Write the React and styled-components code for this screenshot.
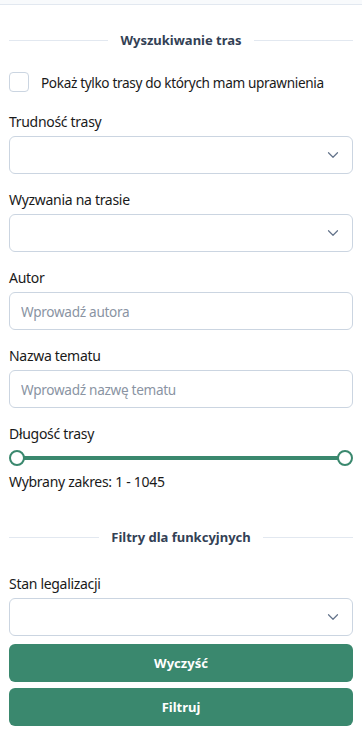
import React, { useState } from "react"
import styled, { createGlobalStyle } from "styled-components"

const GlobalStyle = createGlobalStyle`
  * { box-sizing: border-box; }
  body {
    margin: 0;
    background: #ffffff;
    font-family: "Segoe UI", "Noto Sans", "Open Sans", sans-serif;
    color: #1a1a1a;
  }
`

const green = "#3a886e"

const TopStrip = styled.div`
  height: 5px;
  background: #f8fafc;
  border-bottom: 1px solid #e2e8f0;
`

const Panel = styled.div`
  padding: 0 9px;
  display: flex;
  flex-direction: column;
`

const Divider = styled.div`
  display: flex;
  align-items: center;
  gap: 12px;
  margin-top: ${p => p.$top}px;
  font-size: 13px;
  font-weight: 700;
  color: #334155;
  &::before,
  &::after {
    content: "";
    flex: 1;
    height: 1px;
    background: #e2e8f0;
  }
`

const CheckRow = styled.label`
  display: flex;
  align-items: center;
  gap: 12px;
  margin-top: 23px;
  font-size: 13.6px;
  letter-spacing: -0.35px;
`

const Box = styled.span`
  width: 20px;
  height: 20px;
  border: 1px solid #cbd5e1;
  border-radius: 4px;
  background: #fff;
`

const Field = styled.div`
  display: flex;
  flex-direction: column;
  gap: 5px;
  margin-top: ${p => p.$top || 16}px;
`

const Label = styled.div`
  font-size: 14px;
  line-height: 19px;
  letter-spacing: -0.3px;
`

const SelectBox = styled.div`
  height: 38px;
  border: 1px solid #cbd5e1;
  border-radius: 6px;
  display: flex;
  align-items: center;
  justify-content: flex-end;
  padding-right: 10px;
  color: #64748b;
`

const Input = styled.input`
  height: 38px;
  border: 1px solid #cbd5e1;
  border-radius: 6px;
  padding: 0 11px;
  font-family: inherit;
  font-size: 13.6px;
  letter-spacing: -0.3px;
  outline: none;
  &::placeholder {
    color: #8a94a3;
  }
`

const SliderWrap = styled.div`
  position: relative;
  height: 16px;
  margin: 2px 0 0;
`

const Track = styled.div`
  position: absolute;
  left: 7px;
  right: 7px;
  top: 6px;
  height: 4px;
  background: ${green};
`

const Thumb = styled.div`
  position: absolute;
  top: 0;
  width: 16px;
  height: 16px;
  border-radius: 50%;
  border: 2.5px solid ${green};
  background: #fff;
  ${p => (p.$right ? "right: 0;" : "left: 0;")}
`

const Range = styled.div`
  font-size: 14px;
  letter-spacing: -0.3px;
  margin-top: 6px;
`

const Button = styled.button`
  height: 38px;
  width: 100%;
  border: none;
  border-radius: 6px;
  background: ${green};
  color: #fff;
  font-family: inherit;
  font-size: 13px;
  font-weight: 700;
  margin-top: ${p => p.$top}px;
`

const Chevron = () => (
  <svg width="18" height="18" viewBox="0 0 24 24" fill="none" stroke="currentColor" strokeWidth="1.6" strokeLinecap="round" strokeLinejoin="round">
    <path d="m6 9 6 6 6-6" />
  </svg>
)

const Select = () => (
  <SelectBox>
    <Chevron />
  </SelectBox>
)

export default function App() {
  const [author, setAuthor] = useState("")
  const [topic, setTopic] = useState("")

  return (
    <>
      <GlobalStyle />
      <TopStrip />
      <Panel>
        <Divider $top={26}>Wyszukiwanie tras</Divider>
        <CheckRow>
          <Box />
          Pokaż tylko trasy do których mam uprawnienia
        </CheckRow>

        <Field $top={20}>
          <Label>Trudność trasy</Label>
          <Select />
        </Field>
        <Field>
          <Label>Wyzwania na trasie</Label>
          <Select />
        </Field>
        <Field>
          <Label>Autor</Label>
          <Input value={author} onChange={e => setAuthor(e.target.value)} placeholder="Wprowadź autora" />
        </Field>
        <Field>
          <Label>Nazwa tematu</Label>
          <Input value={topic} onChange={e => setTopic(e.target.value)} placeholder="Wprowadź nazwę tematu" />
        </Field>
        <Field>
          <Label>Długość trasy</Label>
          <SliderWrap>
            <Track />
            <Thumb />
            <Thumb $right />
          </SliderWrap>
        </Field>
        <Range>Wybrany zakres: 1 - 1045</Range>

        <Divider $top={37}>Filtry dla funkcyjnych</Divider>
        <Field $top={28}>
          <Label>Stan legalizacji</Label>
          <Select />
        </Field>
        <Button $top={8}>Wyczyść</Button>
        <Button $top={6}>Filtruj</Button>
      </Panel>
    </>
  )
}
